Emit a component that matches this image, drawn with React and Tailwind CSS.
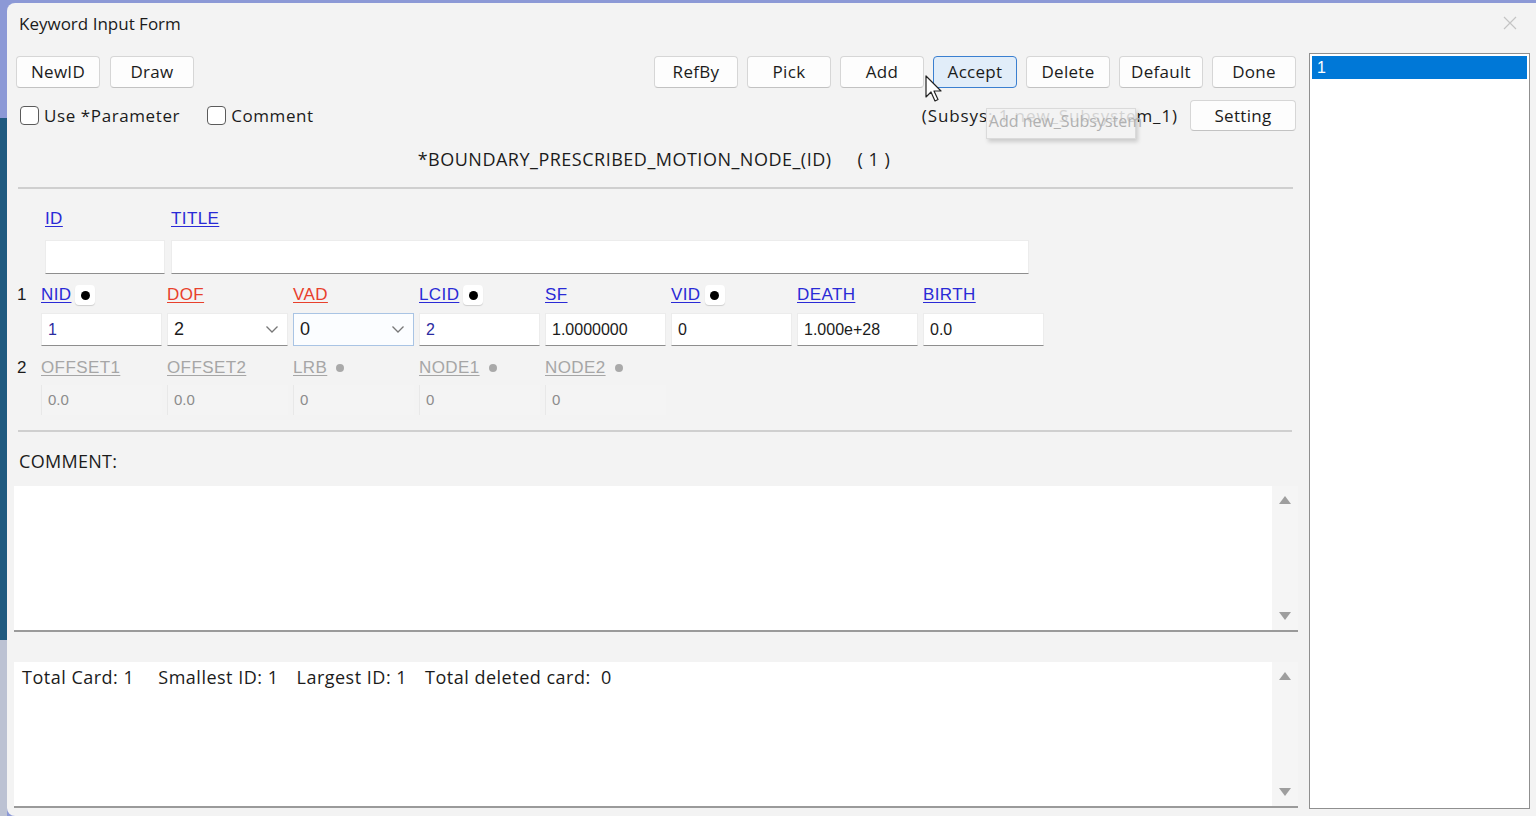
import React from "react";

const UI = "font-['Open_Sans','Noto_Sans',sans-serif]";
const AR = "font-['Liberation_Sans',Arial,sans-serif]";

const Btn = ({ children, active, className = "" }) => (
  <button
    className={`h-[32px] w-[84px] rounded-[4px] border text-[17px] tracking-[0.3px] text-[#1b1b1b] ${
      active
        ? "border-[#3a7fd0] bg-[#e1edf9]"
        : "border-[#d6d6d6] border-b-[#c2c2c2] bg-[#fdfdfd]"
    } ${className}`}
  >
    {children}
  </button>
);

const Check = ({ label }) => (
  <label className="flex items-center gap-[5px] text-[17px] tracking-[0.6px] text-[#1b1b1b]">
    <span className="h-[19px] w-[19px] rounded-[4px] border border-[#5b5b5b] bg-white" />
    {label}
  </label>
);

const Dot = ({ gray }) =>
  gray ? (
    <span className="ml-[9px] h-[8px] w-[8px] rounded-full bg-[#a9a9a9]" />
  ) : (
    <span className="ml-[4px] flex h-[20px] w-[20px] items-center justify-center rounded-[4px] bg-white shadow-[0_1px_1px_rgba(0,0,0,0.15)]">
      <span className="h-[9px] w-[9px] rounded-full bg-black" />
    </span>
  );

const Field = ({ name, color, dot }) => {
  const colors = {
    blue: "text-[#2a2ad6] decoration-[#2a2ad6]",
    red: "text-[#e8402c] decoration-[#e8402c]",
    gray: "text-[#a6a6a6] decoration-[#a6a6a6]",
  };
  return (
    <div className="flex h-[20px] w-[121px] items-center">
      <span className={`${AR} text-[17px] tracking-[0.4px] underline underline-offset-2 ${colors[color]}`}>
        {name}
      </span>
      {dot && <Dot gray={color === "gray"} />}
    </div>
  );
};

const Input = ({ value, blue, select, focus }) => (
  <div
    className={`flex h-[33px] w-[121px] items-center justify-between border px-[6px] ${AR} text-[16px] ${
      blue ? "text-[#2b2ba0]" : "text-[#1b1b1b]"
    } ${
      focus
        ? "border-[#a9c4e4] bg-[#fbfdff]"
        : "border-[#ececec] border-b-[#8e8e8e] bg-white"
    }`}
  >
    <span className={select ? "text-[18px]" : ""}>{value}</span>
    {select && (
      <svg width="14" height="9" viewBox="0 0 14 9" className="mr-[2px]">
        <path d="M1.5 1.5 L7 7 L12.5 1.5" fill="none" stroke="#777" strokeWidth="1.3" />
      </svg>
    )}
  </div>
);

const Ro = ({ value }) => (
  <div className={`flex h-[30px] w-[121px] items-center border-l border-[#e8e8e8] bg-[#f4f4f4] px-[6px] ${AR} text-[15px] text-[#8c8c8c]`}>
    {value}
  </div>
);

const Scroll = () => (
  <div className="flex w-[26px] flex-col items-center justify-between bg-[#f5f5f5] py-[10px]">
    <svg width="12" height="8" viewBox="0 0 12 8">
      <path d="M6 0 L12 8 L0 8 Z" fill="#9e9e9e" />
    </svg>
    <svg width="12" height="8" viewBox="0 0 12 8">
      <path d="M0 0 L12 0 L6 8 Z" fill="#9e9e9e" />
    </svg>
  </div>
);

export default function App() {
  return (
    <div className="flex h-[816px] w-[1536px] overflow-hidden bg-[#8c99d6]">
      {/* desktop strip behind the window */}
      <div className="flex w-[7px] flex-col">
        <div className="h-[118px] bg-[#8c99d6]" />
        <div className="flex-1 bg-[#1f5a80]" />
        <div className="h-[176px] bg-[#bcc2d3]" />
      </div>

      <div className="flex flex-1 flex-col pt-[3px]">
        <div className={`relative flex h-[820px] flex-col rounded-tl-[8px] rounded-bl-[8px] bg-[#f3f3f3] ${UI}`}>
          {/* title bar */}
          <div className="flex h-[50px] items-start justify-between pl-[12px] pr-[18px] pt-[8px]">
            <span className="text-[17px] text-[#1b1b1b]">Keyword Input Form</span>
            <svg width="16" height="16" viewBox="0 0 16 16" className="mt-[4px]">
              <path d="M2 2 L14 14 M14 2 L2 14" stroke="#c4c4c4" strokeWidth="1.2" />
            </svg>
          </div>

          <div className="flex flex-1 pl-[7px]">
            {/* left column */}
            <div className="flex w-[1284px] flex-col">
              <div className="mt-[3px] flex h-[32px] items-center justify-between pl-[2px] pr-[2px]">
                <div className="flex gap-[10px]">
                  <Btn>NewID</Btn>
                  <Btn>Draw</Btn>
                </div>
                <div className="flex gap-[9px]">
                  <Btn>RefBy</Btn>
                  <Btn>Pick</Btn>
                  <Btn>Add</Btn>
                  <Btn active>Accept</Btn>
                  <Btn>Delete</Btn>
                  <Btn>Default</Btn>
                  <Btn>Done</Btn>
                </div>
              </div>

              <div className="mt-[12px] flex h-[31px] items-center justify-between pl-[6px] pr-[2px]">
                <div className="flex gap-[27px]">
                  <Check label="Use *Parameter" />
                  <Check label="Comment" />
                </div>
                <div className="flex items-center gap-[12px]">
                  <div className="relative whitespace-nowrap text-[17px] tracking-[0.9px] text-[#1b1b1b]">
                    (Subsys: 1 new_Subsystem_1)
                    <div className="absolute left-[64px] top-[5px] h-[31px] w-[150px] whitespace-nowrap border border-[#dadada] bg-[#f2f2f2]/85 px-[2px] text-[16px] tracking-normal text-[#b0b0b0] shadow-[2px_3px_4px_rgba(0,0,0,0.16)]">
                      Add new_Subsystem
                    </div>
                  </div>
                  <button className="h-[31px] w-[106px] rounded-[4px] border border-[#d6d6d6] border-b-[#c2c2c2] bg-[#fdfdfd] text-[17px] tracking-[0.3px] text-[#1b1b1b]">
                    Setting
                  </button>
                </div>
              </div>

              <div className="mt-[14px] flex h-[28px] items-center justify-center pr-[4px] text-[18px] tracking-[0.5px] text-[#1b1b1b]">
                <span>*BOUNDARY_PRESCRIBED_MOTION_NODE_(ID)</span>
                <span className="ml-[26px]">( 1 )</span>
              </div>

              <div className="ml-[4px] mr-[5px] mt-[14px] h-[2px] bg-[#cfcfcf]" />

              {/* ID / TITLE */}
              <div className="ml-[31px] mt-[17px] flex h-[20px] gap-[5px]">
                <div className="w-[121px]">
                  <span className={`${AR} text-[17px] tracking-[0.4px] text-[#2a2ad6] underline underline-offset-2`}>ID</span>
                </div>
                <span className={`${AR} text-[17px] tracking-[0.4px] text-[#2a2ad6] underline underline-offset-2`}>TITLE</span>
              </div>
              <div className="ml-[31px] mt-[14px] flex h-[34px] gap-[6px]">
                <div className="w-[120px] border border-[#ececec] border-b-[#8e8e8e] bg-white" />
                <div className="w-[858px] border border-[#ececec] border-b-[#8e8e8e] bg-white" />
              </div>

              {/* card 1 */}
              <div className="mt-[11px] flex h-[20px] items-center">
                <span className={`${AR} w-[27px] pl-[3px] text-[17px] text-[#1b1b1b]`}>1</span>
                <div className="flex gap-[5px]">
                  <Field name="NID" color="blue" dot />
                  <Field name="DOF" color="red" />
                  <Field name="VAD" color="red" />
                  <Field name="LCID" color="blue" dot />
                  <Field name="SF" color="blue" />
                  <Field name="VID" color="blue" dot />
                  <Field name="DEATH" color="blue" />
                  <Field name="BIRTH" color="blue" />
                </div>
              </div>
              <div className="ml-[27px] mt-[8px] flex gap-[5px]">
                <Input value="1" blue />
                <Input value="2" select />
                <Input value="0" select focus />
                <Input value="2" blue />
                <Input value="1.0000000" />
                <Input value="0" />
                <Input value="1.000e+28" />
                <Input value="0.0" />
              </div>

              {/* card 2 */}
              <div className="mt-[12px] flex h-[20px] items-center">
                <span className={`${AR} w-[27px] pl-[3px] text-[17px] text-[#1b1b1b]`}>2</span>
                <div className="flex gap-[5px]">
                  <Field name="OFFSET1" color="gray" />
                  <Field name="OFFSET2" color="gray" />
                  <Field name="LRB" color="gray" dot />
                  <Field name="NODE1" color="gray" dot />
                  <Field name="NODE2" color="gray" dot />
                </div>
              </div>
              <div className="ml-[27px] mt-[7px] flex gap-[5px]">
                <Ro value="0.0" />
                <Ro value="0.0" />
                <Ro value="0" />
                <Ro value="0" />
                <Ro value="0" />
              </div>

              <div className="ml-[4px] mr-[6px] mt-[15px] h-[2px] bg-[#cfcfcf]" />

              <div className="mt-[19px] flex h-[20px] items-center pl-[5px] text-[18px] tracking-[0.3px] text-[#1b1b1b]">COMMENT:</div>

              <div className="mt-[15px] flex h-[146px] border-b-2 border-[#9a9a9a]">
                <div className="flex-1 bg-white" />
                <Scroll />
              </div>

              <div className="mt-[30px] flex h-[146px] border-b-2 border-[#9a9a9a]">
                <div className="flex-1 whitespace-nowrap bg-white pl-[8px] pt-[2px] text-[18px] tracking-[0.5px] text-[#1b1b1b]">
                  <span>Total Card: 1</span>
                  <span className="ml-[24px]">Smallest ID: 1</span>
                  <span className="ml-[18px]">Largest ID: 1</span>
                  <span className="ml-[18px]">Total deleted card:&nbsp; 0</span>
                </div>
                <Scroll />
              </div>
            </div>

            {/* right list */}
            <div className="ml-[11px] mr-[6px] flex h-[756px] flex-1 flex-col border border-[#8f8f8f] bg-white p-[2px]">
              <div className={`flex h-[23px] items-center bg-[#0078d7] pl-[5px] ${AR} text-[16px] text-white`}>1</div>
            </div>
          </div>

          {/* mouse cursor */}
          <svg width="20" height="30" viewBox="0 0 20 30" className="absolute left-[918px] top-[72px]">
            <path d="M1 1 L1 22 L6 17 L10 26 L13 24.5 L9 16 L16 16 Z" fill="white" stroke="#222" strokeWidth="1.2" strokeLinejoin="round" />
          </svg>
        </div>
      </div>
    </div>
  );
}
